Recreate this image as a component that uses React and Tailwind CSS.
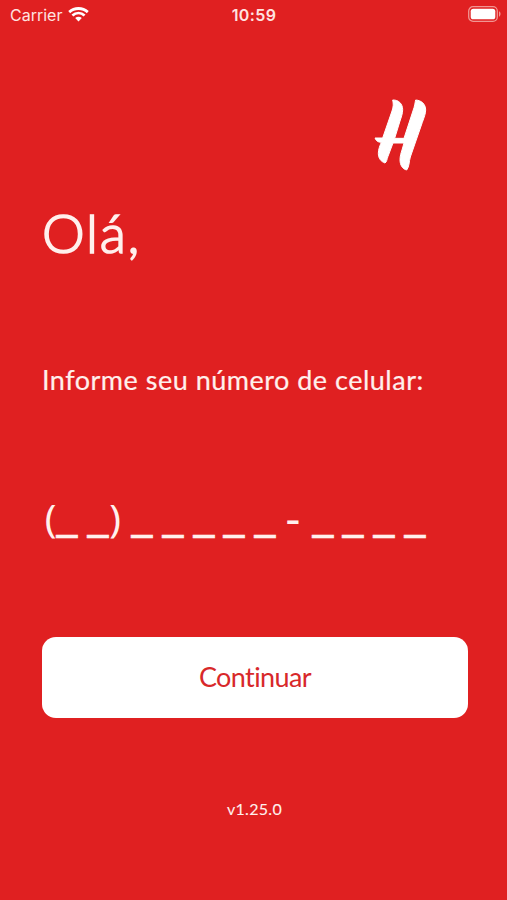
const phoneMask = [
  { text: '(', style: 'w-[14px] pl-[3px] text-[39px] -mt-[3px] [-webkit-text-stroke:0]' },
  { text: '_', style: 'w-[22px] text-[48px] -mt-[7px]' },
  { text: '_', style: 'w-[22px] ml-[9px] text-[48px] -mt-[7px]' },
  { text: ')', style: 'w-[14px] pr-[2px] text-[39px] -mt-[3px] [-webkit-text-stroke:0]' },
  { text: '_', style: 'w-[22px] ml-[8px] text-[48px] -mt-[7px]' },
  { text: '_', style: 'w-[22px] ml-[9px] text-[48px] -mt-[7px]' },
  { text: '_', style: 'w-[22px] ml-[9px] text-[48px] -mt-[7px]' },
  { text: '_', style: 'w-[22px] ml-[8px] text-[48px] -mt-[7px]' },
  { text: '_', style: 'w-[22px] ml-[9px] text-[48px] -mt-[7px]' },
  { text: '-', style: 'w-[14px] ml-[10px] text-[46px] -mt-[4px] [-webkit-text-stroke:0]' },
  { text: '_', style: 'w-[22px] ml-[12px] text-[48px] -mt-[7px]' },
  { text: '_', style: 'w-[22px] ml-[8px] text-[48px] -mt-[7px]' },
  { text: '_', style: 'w-[22px] ml-[9px] text-[48px] -mt-[7px]' },
  { text: '_', style: 'w-[22px] ml-[9px] text-[48px] -mt-[7px]' },
]

const StatusBar = () => (
  <div className="grid grid-cols-3 items-center h-[30px] pl-[10px] pr-[6px] font-['Inter',sans-serif] text-[#ffe3e0]">
    <div className="flex items-center gap-[6px]">
      <span className="text-[16px]">Carrier</span>
      <svg className="w-[21px] h-[15px] -mt-[2px]" viewBox="0 0 21 15" fill="none" stroke="white" strokeWidth="2.8">
        <path d="M1.2 5.1C6.5 0.3 14.5 0.3 19.8 5.1" />
        <path d="M4.4 8.5C8 5.4 13 5.4 16.6 8.5" />
        <path d="M7.2 11.1C9.1 9.3 11.9 9.3 13.8 11.1L10.5 14.4Z" fill="white" stroke="none" />
      </svg>
    </div>
    <span className="text-center text-[16px] font-semibold tracking-[0.4px] pr-[3px]">10:59</span>
    <svg className="w-[33px] h-[16px] justify-self-end -mt-[2px]" viewBox="0 0 33 16" fill="none">
      <rect x="0.7" y="0.7" width="28.6" height="14.6" rx="4.4" stroke="#f19592" strokeWidth="1.3" />
      <rect x="2.7" y="2.7" width="24.6" height="10.6" rx="2.6" fill="white" />
      <path d="M31 5.3C33 6.1 33 9.9 31 10.7Z" fill="#f19592" />
    </svg>
  </div>
)

const Logo = () => (
  <svg className="w-[80px] h-[95px] mt-[55px] ml-[318px]" viewBox="0 0 240 285" fill="white" stroke="white" strokeWidth="3" strokeLinejoin="round">
    <path d="M98 45C116 44 128 57 128 74C128 85 124 96 120 108L104 160H132L162 68C166 55 165 51 167 45C185 46 197 58 197 75C197 86 192 98 187 112L151 216C147 229 148 246 140 255C128 252 120 241 120 224C120 214 123 204 126 195L132 174H99L84 214C80 224 81 230 75 234C63 230 55 220 55 205C55 193 60 181 64 172C55 172 49 169 45 159L68 159L96 78C102 60 99 52 98 45Z" />
  </svg>
)

const App = () => {
  return (
    <div className="w-full h-[900px] bg-[#e02021] font-['Lato',sans-serif] text-[#fff0ed] overflow-hidden">
      <StatusBar />

      <main className="flex flex-col items-start pl-[42px] pr-[40px]">
        <Logo />

        <h1 className="mt-[18px] h-[70px] leading-[70px] text-[54px] font-light tracking-[1.8px] whitespace-nowrap [-webkit-text-stroke:1.7px_#fff0ed]">Olá,</h1>

        <label htmlFor="phone" className="mt-[92px] h-[40px] leading-[40px] text-[27px] tracking-[0.5px] whitespace-nowrap [-webkit-text-stroke:0.2px_#fff0ed]">
          Informe seu número de celular:
        </label>

        <div id="phone" className="flex mt-[90px] h-[60px] leading-[60px] font-['Noto_Sans',sans-serif] [-webkit-text-stroke:0.6px_#fff0ed]">
          {phoneMask.map((item, i) => (
            <span key={i} className={`${item.style} flex justify-center shrink-0`}>{item.text}</span>
          ))}
        </div>

        <button className="mt-[87px] w-[426px] h-[81px] rounded-[14px] bg-white text-[#d8282a] text-[27px] tracking-[-0.6px] cursor-pointer">
          Continuar
        </button>

        <p className="self-center mt-[79px] h-[24px] leading-[24px] text-[16px] tracking-[0.3px] [-webkit-text-stroke:0.1px_#fff0ed]">v1.25.0</p>
      </main>
    </div>
  )
}

export default App
